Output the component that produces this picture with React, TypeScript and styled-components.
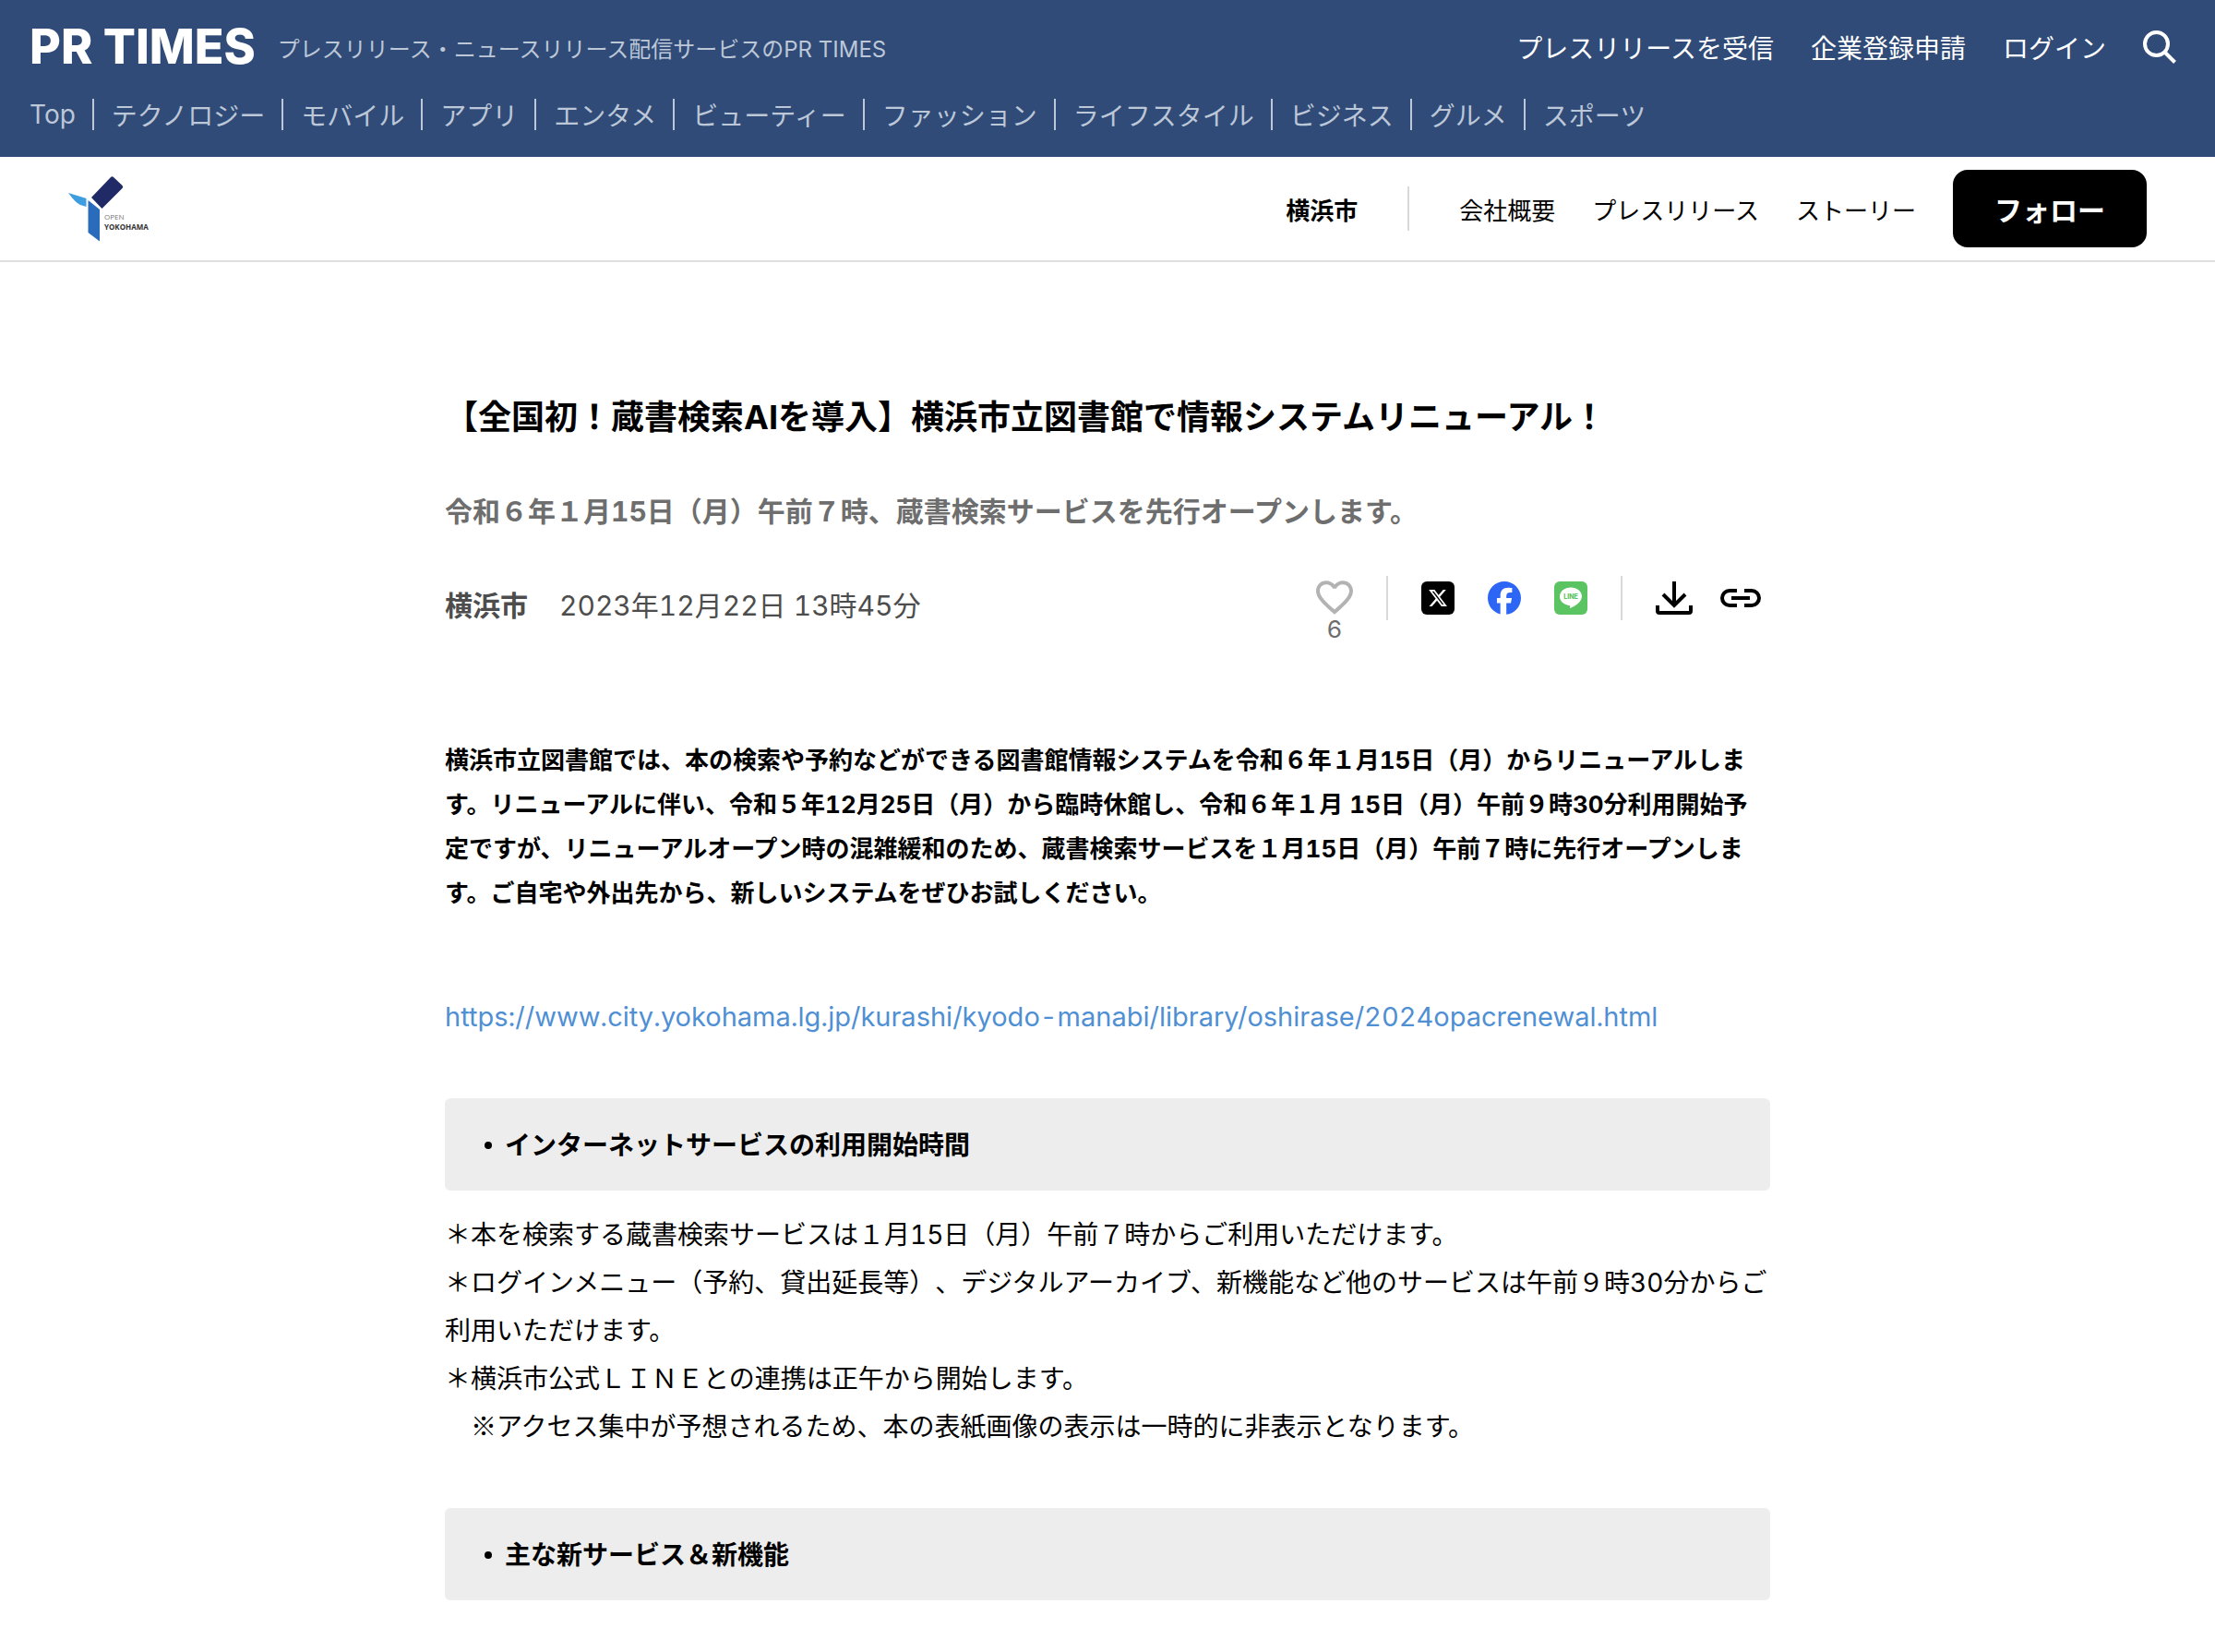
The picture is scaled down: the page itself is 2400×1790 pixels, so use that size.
import React from "react";
import styled, { createGlobalStyle, css } from "styled-components";
import { FaFacebook, FaXTwitter } from "react-icons/fa6";

const GlobalStyle = createGlobalStyle`
  *, *::before, *::after { box-sizing: border-box; }
  body {
    margin: 0;
    background: #fff;
    color: #000;
    font-family: Inter, "Noto Sans CJK JP", sans-serif;
    font-size: 28px;
    text-spacing-trim: space-all;
  }
  h1, h2, p, ul { margin: 0; padding: 0; }
  ul { list-style: none; }
  a { color: inherit; text-decoration: none; }
  button { font: inherit; border: 0; padding: 0; background: none; color: inherit; cursor: pointer; }
  svg { display: block; }
`;

const SiteHeader = styled.header`
  background: #304b77;
  color: #fff;
  padding: 0 42px 24px 32px;
`;

const HeaderTop = styled.div`
  display: flex;
  align-items: center;
  height: 102px;
`;

const Logo = styled.a`
  font-size: 52px;
  font-weight: 800;
  line-height: 1;
`;

const Tagline = styled.p`
  margin-left: 24px;
  font-size: 24px;
  color: #bcc7d8;
`;

const AccountNav = styled.nav`
  display: flex;
  align-items: center;
  gap: 40px;
  margin-left: auto;
`;

const CategoryList = styled.ul`
  display: flex;
  align-items: center;
  height: 44px;
  color: #bcc7d8;
`;

const Category = styled.li`
  display: flex;
  align-items: center;
  height: 34px;
  padding: 0 18px 0 19px;
  border-right: 2px solid #bcc7d8;
  white-space: nowrap;
  &:first-child { padding-left: 0; }
  &:last-child { border-right: 0; }
`;

const CompanyBar = styled.div`
  display: flex;
  align-items: center;
  gap: 40px;
  height: 114px;
  padding: 0 74px;
  border-bottom: 2px solid #dfdfdf;
  font-size: 26px;
`;

const CompanyLogo = styled.a`
  margin-right: auto;
`;

const CompanyName = styled.a`
  font-weight: 700;
`;

const Divider = styled.span<{ $space: number }>`
  width: 2px;
  height: 48px;
  margin: 0 ${(p) => p.$space}px;
  background: #d9d9d9;
`;

const FollowButton = styled.button`
  width: 210px;
  height: 84px;
  border-radius: 16px;
  background: #000;
  color: #fff;
  font-size: 30px;
  font-weight: 700;
`;

const Article = styled.main`
  max-width: 1436px;
  margin: 0 auto;
  padding: 140px 0 56px;
  font-variant-numeric: tabular-nums;
`;

const Title = styled.h1`
  font-size: 36px;
  line-height: 56px;
`;

const Subtitle = styled.p`
  margin-top: 50px;
  font-size: 30px;
  font-weight: 700;
  line-height: 48px;
  color: #6e6e6e;
`;

const Meta = styled.div`
  display: flex;
  justify-content: space-between;
  height: 72px;
  margin-top: 46px;
`;

const Byline = styled.div`
  display: flex;
  align-items: center;
  gap: 34px;
  height: 60px;
  font-size: 30px;
  color: #4d4d4d;
`;

const Publisher = styled.a`
  font-weight: 700;
`;

const Actions = styled.div`
  display: flex;
  align-items: flex-start;
  padding-right: 10px;
`;

const ActionGroup = styled.div<{ $gap: number }>`
  display: flex;
  align-items: center;
  gap: ${(p) => p.$gap}px;
  height: 48px;
`;

const ActionButton = styled.button`
  display: block;
`;

const LikeButton = styled.button`
  display: flex;
  flex-direction: column;
  align-items: center;
  gap: 6px;
  padding-top: 5px;
  font-size: 26px;
  line-height: 20px;
  color: #6e6e6e;
`;

const XBadge = styled.span`
  display: grid;
  place-items: center;
  width: 36px;
  height: 36px;
  border-radius: 6px;
  background: #000;
  color: #fff;
`;

const Lead = styled.p`
  margin-top: 104px;
  font-size: 26px;
  font-weight: 700;
  line-height: 48px;
`;

const bodyText = css`
  font-size: 28px;
  line-height: 52px;
`;

const ExternalLink = styled.a`
  ${bodyText}
  display: block;
  margin-top: 84px;
  font-size: 29px;
  color: #4f8fd3;
`;

const SectionHeading = styled.h2`
  display: flex;
  align-items: center;
  gap: 14px;
  height: 100px;
  margin-top: 62px;
  padding: 0 0 2px 43px;
  border-radius: 6px;
  background: #ededed;
  font-size: 28px;
  &::before {
    content: "";
    width: 8px;
    height: 8px;
    margin-top: 4px;
    border-radius: 50%;
    background: #000;
  }
`;

const SectionText = styled.p`
  ${bodyText}
  margin-top: 22px;
  white-space: pre-line;
`;

const NoteMark = styled.span`
  font-family: "Noto Sans CJK JP", sans-serif;
  line-height: 1;
`;

const categories = [
  "Top", "テクノロジー", "モバイル", "アプリ", "エンタメ", "ビューティー",
  "ファッション", "ライフスタイル", "ビジネス", "グルメ", "スポーツ",
];

const SearchIcon = () => (
  <svg width="36" height="36" viewBox="0 0 36 36" fill="none" stroke="currentColor" strokeWidth="4">
    <circle cx="14.5" cy="14.5" r="12.5" />
    <path d="M23.5 23.5 34.5 34.5" />
  </svg>
);

const YokohamaLogo = () => (
  <svg width="92" height="74" viewBox="0 0 92 74">
    <path d="M0 20 19.5 26V35L13 33Q8 31 0 20Z" fill="#3d9de0" />
    <path d="M21.500 28 34 38V72.500L21.500 63Z" fill="#2a6cbb" />
    <path d="M46 3Q47.500 1.500 49 3L58.500 12Q60 13.500 58.500 15L36.500 37 25 25Z" fill="#1f2a66" />
    <g fontFamily="Open Sans, sans-serif" fontSize="8">
      <text x="39" y="49" fill="#777">OPEN</text>
      <text x="39" y="60" fill="#333" fontWeight="700">YOKOHAMA</text>
    </g>
  </svg>
);

const HeartIcon = () => (
  <svg width="40" height="37" viewBox="2 3 20 18.350" fill="#b3b3b3">
    <path d="M16.500 3c-1.740 0-3.410.81-4.500 2.090C10.910 3.810 9.240 3 7.500 3 4.420 3 2 5.420 2 8.500c0 3.780 3.400 6.860 8.550 11.540L12 21.350l1.450-1.320C18.600 15.360 22 12.280 22 8.500 22 5.420 19.580 3 16.500 3zm-4.400 15.550-.1.1-.1-.1C7.140 14.240 4 11.390 4 8.500 4 6.500 5.500 5 7.500 5c1.540 0 3.040.99 3.570 2.360h1.870C13.460 5.990 14.960 5 16.500 5c2 0 3.500 1.500 3.500 3.500 0 2.890-3.140 5.740-7.900 10.050z" />
  </svg>
);

const LineIcon = () => (
  <svg width="36" height="36" viewBox="0 0 36 36">
    <rect width="36" height="36" rx="6" fill="#5ac463" />
    <path d="M18 6.500C11.200 6.500 6 10.900 6 16.300c0 4.900 4.200 8.900 10 9.700 1.400.2 1.500.9 1.200 3.200 4-1.900 12.800-6.500 12.800-12.900C30 10.900 24.800 6.500 18 6.500Z" fill="#fff" />
    <text x="18" y="19" textAnchor="middle" fontSize="7" fontWeight="800" fill="#5ac463">LINE</text>
  </svg>
);

const DownloadIcon = () => (
  <svg width="40" height="36" viewBox="0 0 40 36" fill="none" stroke="currentColor" strokeWidth="4">
    <path d="M20 0V26M8 14 20 26 32 14" />
    <path d="M2 26V32Q2 34 4 34H36Q38 34 38 32V26" />
  </svg>
);

const LinkIcon = () => (
  <svg width="44" height="20" viewBox="0 0 44 20" fill="none" stroke="currentColor" strokeWidth="4">
    <path d="M18 2H10A8 8 0 0 0 10 18H18M26 2H34A8 8 0 0 1 34 18H26M12 10H32" />
  </svg>
);

export default function App() {
  return (
    <>
      <GlobalStyle />
      <SiteHeader>
        <HeaderTop>
          <Logo href="#">PR TIMES</Logo>
          <Tagline>プレスリリース・ニュースリリース配信サービスのPR TIMES</Tagline>
          <AccountNav>
            <a href="#">プレスリリースを受信</a>
            <a href="#">企業登録申請</a>
            <a href="#">ログイン</a>
            <button aria-label="検索"><SearchIcon /></button>
          </AccountNav>
        </HeaderTop>
        <nav>
          <CategoryList>
            {categories.map((name) => (
              <Category key={name}><a href="#">{name}</a></Category>
            ))}
          </CategoryList>
        </nav>
      </SiteHeader>
      <CompanyBar>
        <CompanyLogo href="#" aria-label="横浜市"><YokohamaLogo /></CompanyLogo>
        <CompanyName href="#">横浜市</CompanyName>
        <Divider $space={14} />
        <a href="#">会社概要</a>
        <a href="#">プレスリリース</a>
        <a href="#">ストーリー</a>
        <FollowButton>フォロー</FollowButton>
      </CompanyBar>
      <Article>
        <Title>【全国初！蔵書検索AIを導入】横浜市立図書館で情報システムリニューアル！</Title>
        <Subtitle>令和６年１月15日（月）午前７時、蔵書検索サービスを先行オープンします。</Subtitle>
        <Meta>
          <Byline>
            <Publisher href="#">横浜市</Publisher>
            <time dateTime="2023-12-22T13:45">2023年12月22日 13時45分</time>
          </Byline>
          <Actions>
            <LikeButton aria-label="いいね">
              <HeartIcon />
              6
            </LikeButton>
            <Divider $space={36} />
            <ActionGroup $gap={36}>
              <ActionButton aria-label="Xでシェア"><XBadge><FaXTwitter size={22} /></XBadge></ActionButton>
              <ActionButton aria-label="Facebookでシェア"><FaFacebook size={36} color="#2d66f4" /></ActionButton>
              <ActionButton aria-label="LINEでシェア"><LineIcon /></ActionButton>
            </ActionGroup>
            <Divider $space={36} />
            <ActionGroup $gap={30}>
              <ActionButton aria-label="ダウンロード"><DownloadIcon /></ActionButton>
              <ActionButton aria-label="リンクをコピー"><LinkIcon /></ActionButton>
            </ActionGroup>
          </Actions>
        </Meta>
        <Lead>
          横浜市立図書館では、本の検索や予約などができる図書館情報システムを令和６年１月15日（月）からリニューアルします。リニューアルに伴い、令和５年12月25日（月）から臨時休館し、令和６年１月 15日（月）午前９時30分利用開始予定ですが、リニューアルオープン時の混雑緩和のため、蔵書検索サービスを１月15日（月）午前７時に先行オープンします。ご自宅や外出先から、新しいシステムをぜひお試しください。
        </Lead>
        <ExternalLink href="#">https://www.city.yokohama.lg.jp/kurashi/kyodo-manabi/library/oshirase/2024opacrenewal.html</ExternalLink>
        <SectionHeading>インターネットサービスの利用開始時間</SectionHeading>
        <SectionText>
          {"＊本を検索する蔵書検索サービスは１月15日（月）午前７時からご利用いただけます。\n" +
            "＊ログインメニュー（予約、貸出延長等）、デジタルアーカイブ、新機能など他のサービスは午前９時30分からご利用いただけます。\n" +
            "＊横浜市公式ＬＩＮＥとの連携は正午から開始します。\n　"}
          <NoteMark>※</NoteMark>
          アクセス集中が予想されるため、本の表紙画像の表示は一時的に非表示となります。
        </SectionText>
        <SectionHeading>主な新サービス＆新機能</SectionHeading>
      </Article>
    </>
  );
}
